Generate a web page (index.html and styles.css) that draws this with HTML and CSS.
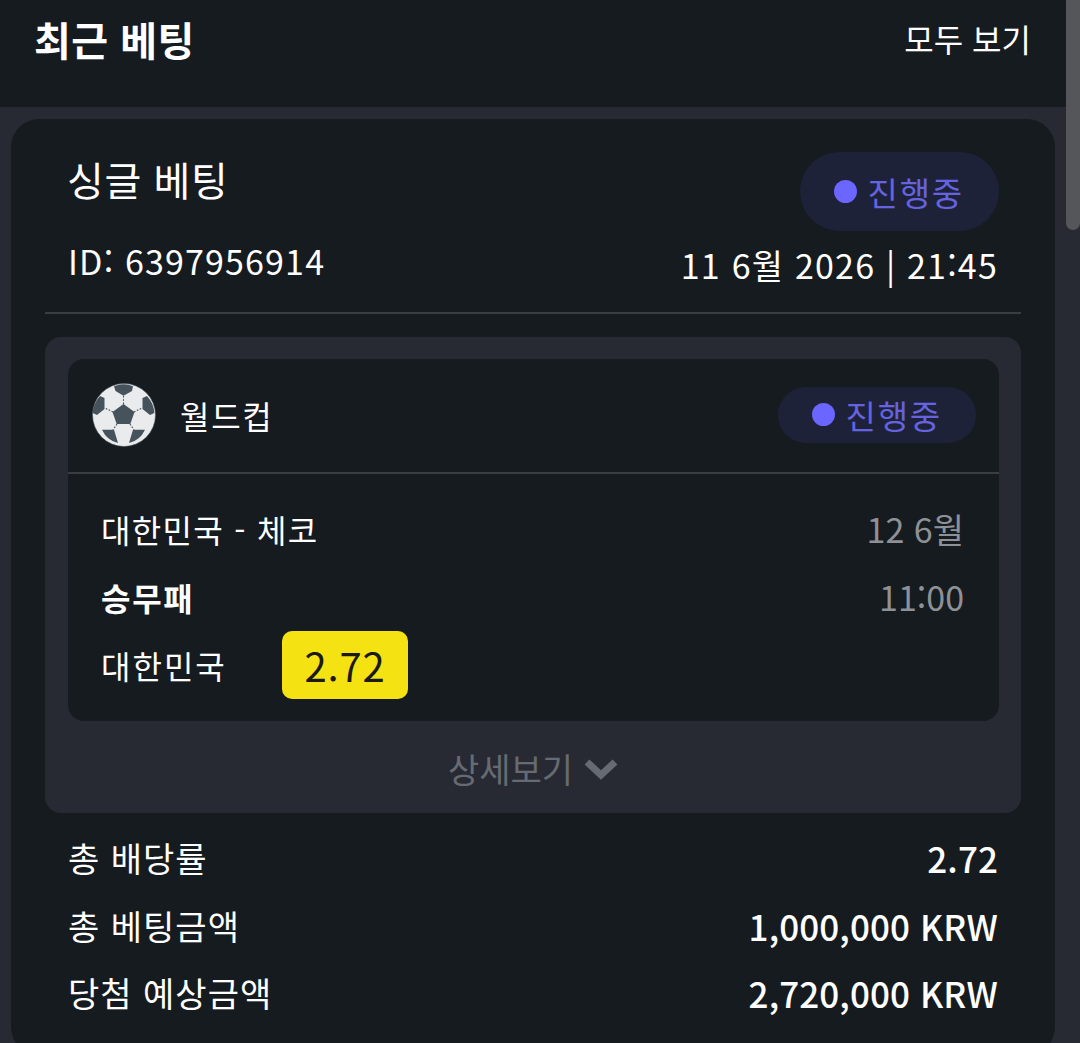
FILE: index.html
```html
<!DOCTYPE html>
<html lang="ko">
<head>
  <meta charset="UTF-8">
  <title>최근 베팅</title>
  <link rel="stylesheet" href="styles.css">
</head>
<body>
  <div class="page">
    <div class="main">
      <div class="header">
        <div class="title">최근 베팅</div>
        <a class="see-all" href="#">모두 보기</a>
      </div>

      <div class="content">
        <div class="bet-card">
          <div class="bet-head">
            <div class="bet-head-left">
              <div class="bet-type">싱글 베팅</div>
              <div class="bet-id">ID: 6397956914</div>
            </div>
            <div class="bet-head-right">
              <div class="status status-big"><span class="dot"></span>진행중</div>
              <div class="bet-date">11 6월 2026 | 21:45</div>
            </div>
          </div>

          <div class="match-box">
            <div class="match-card">
              <div class="league">
                <svg class="ball" viewBox="0 0 64 64">
                  <circle cx="32" cy="32" r="31.5" fill="#e9ebec" stroke="#46525c" stroke-width="0.6"/>
                  <g stroke="#46525c" stroke-width="1.1" stroke-dasharray="1.6 1.6" fill="none">
                    <path d="M31.500 21 V12.700"/>
                    <path d="M42 29 L50 25"/>
                    <path d="M21 29 L13 25"/>
                    <path d="M38 41 L42 47"/>
                    <path d="M25 41 L21 47"/>
                  </g>
                  <g fill="#46525c">
                    <path d="M31.500 21 L42.500 29 L38.300 41 L24.700 41 L20.500 29 Z"/>
                    <path d="M22 3.300 Q31.500 -0.700 41 3.300 L40 8 L31.500 12.700 L23.500 8 Z"/>
                    <path d="M8 13 L12.500 15 L12.500 26 L5 32 L0.800 30 Q0.800 21 8 13 Z"/>
                    <path d="M55 13 L50.500 15 L50.500 26 L58 32 L62.200 30 Q62.200 21 55 13 Z"/>
                    <path d="M10 46.700 L22 46.700 L26 60 Q15 57.500 10 46.700 Z"/>
                    <path d="M53 46.700 L41 46.700 L37 60 Q48 57.500 53 46.700 Z"/>
                  </g>
                </svg>
                <div class="league-name">월드컵</div>
                <div class="status status-small"><span class="dot"></span>진행중</div>
              </div>

              <div class="match-body">
                <div class="match-row">
                  <div class="match-name">대한민국 - 체코</div>
                  <div class="match-time">12 6월</div>
                </div>
                <div class="match-row">
                  <div class="market">승무패</div>
                  <div class="match-time">11:00</div>
                </div>
                <div class="pick-row">
                  <div class="pick">대한민국</div>
                  <div class="odds">2.72</div>
                </div>
              </div>
            </div>

            <div class="more">상세보기
              <svg class="chevron" viewBox="0 0 36 24">
                <path d="M4 5 L18 18 L32 5" fill="none" stroke="#666a72" stroke-width="7"/>
              </svg>
            </div>
          </div>

          <div class="summary">
            <div class="summary-row"><span>총 배당률</span><b>2.72</b></div>
            <div class="summary-row"><span>총 베팅금액</span><b>1,000,000 KRW</b></div>
            <div class="summary-row"><span>당첨 예상금액</span><b>2,720,000 KRW</b></div>
          </div>
        </div>
      </div>
    </div>

    <div class="scrollbar"><div class="thumb"></div></div>
  </div>
</body>
</html>
```

FILE: styles.css
```css
html, body { margin: 0; height: 100%; overflow: hidden; }
body {
  font-family: 'Noto Sans CJK KR', 'Noto Sans', sans-serif;
  background: #161b20;
  color: #fff;
}
.page {
  display: flex;
  height: 1043px;
  overflow: hidden;
}
.main {
  flex: 1;
  min-width: 0;
}
.scrollbar {
  width: 14px;
  background: #272a32;
}
.thumb {
  height: 230px;
  background: #54565a;
  border-radius: 0 0 7px 7px;
}

.header {
  height: 107px;
  padding: 0 35px 0 34px;
  display: flex;
  justify-content: space-between;
  align-items: flex-start;
  background: #161b20;
}
.title {
  font-size: 40px;
  font-weight: 700;
  line-height: 78px;
  letter-spacing: 0.5px;
}
.see-all {
  font-size: 32px;
  line-height: 76px;
  color: #fff;
  text-decoration: none;
}

.content {
  background: #272a32;
  padding: 12px 11px 0;
  height: 936px;
}
.bet-card {
  background: #161b20;
  border-radius: 28px;
  padding: 33px 34px 0;
  height: 903px;
}
.bet-head {
  display: flex;
  justify-content: space-between;
  padding: 0 22px 22px 23px;
  margin-bottom: 23px;
  border-bottom: 2px solid #3a3d42;
}
.bet-type { font-size: 40px; line-height: 54px; letter-spacing: 0.6px; margin-left: -1px; }
.bet-id { font-size: 34px; line-height: 50px; margin-top: 30px; letter-spacing: 1.15px; }
.bet-head-right {
  display: flex;
  flex-direction: column;
  align-items: flex-end;
}
.bet-date { font-size: 34px; line-height: 50px; margin-top: 9px; letter-spacing: 1.2px; margin-right: 1px; }

.status {
  display: flex;
  align-items: center;
  background: #1e2238;
  color: #6563e0;
  border-radius: 40px;
  font-size: 33px;
  letter-spacing: 1.8px;
}
.status-big {
  height: 79px;
  padding: 0 35px 0 34px;
}
.status-small {
  height: 56px;
  padding: 0 34px 0 34px;
  margin-left: auto;
}
.dot {
  width: 23px;
  height: 23px;
  border-radius: 50%;
  background: #6b66ff;
  margin-right: 11px;
}

.match-box {
  background: #272a32;
  border-radius: 16px;
  padding: 22px 22px 0 23px;
}
.match-card {
  background: #161b20;
  border-radius: 16px;
}
.league {
  display: flex;
  align-items: center;
  height: 115px;
  padding: 0 23px 2px 24px;
  border-bottom: 2px solid #3a3d42;
  box-sizing: border-box;
}
.ball { width: 64px; height: 64px; }
.league-name { font-size: 32px; margin-left: 24px; letter-spacing: 1.7px; }
.match-body { padding: 21px 35px 22px 33px; }
.match-row {
  display: flex;
  justify-content: space-between;
  font-size: 32px;
  line-height: 68px;
}
.match-name { letter-spacing: 1.3px; }
.match-time { color: #8e9196; font-size: 34px; }
.market { font-weight: 700; letter-spacing: 1.7px; }
.pick-row {
  display: flex;
  align-items: center;
  font-size: 32px;
  letter-spacing: 2px;
}
.pick { width: 181px; }
.odds {
  background: #f4e213;
  color: #1a1a12;
  font-size: 40px;
  letter-spacing: 0.8px;
  width: 126px;
  height: 68px;
  line-height: 68px;
  text-align: center;
  border-radius: 10px;
}
.more {
  display: flex;
  align-items: center;
  justify-content: center;
  height: 92px;
  padding-top: 3px;
  box-sizing: border-box;
  font-size: 34px;
  color: #666a72;
}
.chevron { width: 36px; height: 24px; margin-left: 10px; }

.summary { padding: 11px 23px 0; }
.summary-row {
  display: flex;
  justify-content: space-between;
  font-size: 34px;
  line-height: 67.500px;
  letter-spacing: 1px;
}
.summary-row b { font-weight: 500; font-size: 35px; letter-spacing: 0.1px; }
```
